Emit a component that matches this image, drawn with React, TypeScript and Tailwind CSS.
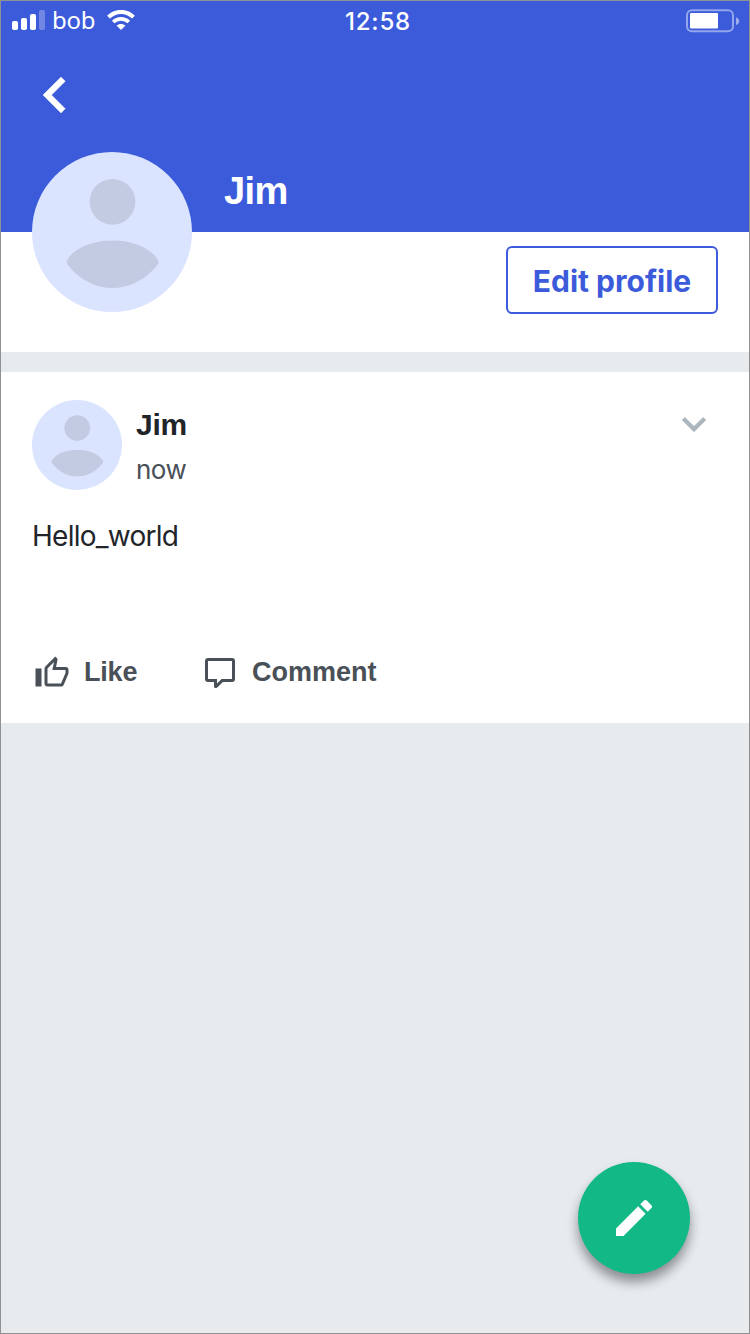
import React from "react";

function Avatar({ className }: { className: string }) {
  return (
    <svg viewBox="0 0 160 160" className={className}>
      <circle cx="80" cy="80" r="80" fill="#dbe4ff" />
      <circle cx="80.5" cy="49.8" r="22.9" fill="#c3cbe3" />
      <path
        d="M35.6 107.5C42 96 60 88.4 80.5 88.4S119 96 125.6 107.5Q127.6 110 125.6 112.5C114 128 97 136 80.5 136S47 128 35.6 112.5Q33.6 110 35.6 107.5Z"
        fill="#c3cbe3"
      />
    </svg>
  );
}

function Icon({ d, className }: { d: string; className: string }) {
  return (
    <svg viewBox="0 0 24 24" fill="currentColor" className={className}>
      <path d={d} />
    </svg>
  );
}

const icons = {
  back: "M15.41 16.58 10.83 12l4.58-4.59L14 6l-6 6 6 6 1.41-1.42Z",
  down: "M7.41 8.58 12 13.17l4.59-4.59L18 10l-6 6-6-6 1.41-1.42Z",
  like: "M5,9V21H1V9H5M9,21A2,2 0 0,1 7,19V9C7,8.45 7.22,7.95 7.59,7.59L14.17,1L15.23,2.06C15.5,2.33 15.67,2.7 15.67,3.11L15.64,3.43L14.69,8H21A2,2 0 0,1 23,10V12C23,12.26 22.95,12.5 22.86,12.73L19.84,19.78C19.54,20.5 18.83,21 18,21H9M9,19H18.03L21,12V10H12.21L13.34,4.68L9,9.03V19Z",
  comment:
    "M9,22A1,1 0 0,1 8,21V18H4A2,2 0 0,1 2,16V4C2,2.89 2.9,2 4,2H20A2,2 0 0,1 22,4V16A2,2 0 0,1 20,18H13.9L10.2,21.71C10,21.9 9.75,22 9.5,22H9M10,16V19.08L13.08,16H20V4H4V16H10Z",
  pencil:
    "M20.71,7.04C21.1,6.65 21.1,6 20.71,5.63L18.37,3.29C18,2.9 17.35,2.9 16.96,3.29L15.12,5.12L18.87,8.87M3,17.25V21H6.75L17.81,9.93L14.06,6.18L3,17.25Z",
};

function StatusBar() {
  return (
    <div className="grid h-[39px] grid-cols-3 items-center text-white">
      <div className="flex items-center pl-[11px]">
        <svg viewBox="0 0 33 20" className="-mt-px h-5 w-[33px]" fill="white">
          <rect x="0" y="11" width="6" height="9" rx="1.8" />
          <rect x="9" y="8" width="6" height="12" rx="1.8" />
          <rect x="18" y="4" width="6" height="16" rx="1.8" />
          <rect x="27" y="0" width="6" height="20" rx="1.8" opacity="0.27" />
        </svg>
        <span className="-mt-[2px] ml-[7px] w-[43px] whitespace-nowrap font-['Noto_Sans',sans-serif] text-2xl leading-none tracking-[-0.3px]">
          bob
        </span>
        <svg viewBox="0 0 28 20" className="-mt-px ml-3 h-5 w-7" fill="none" stroke="white">
          <path d="M1.5 7.2C8.5.1 19.5.1 26.5 7.2" strokeWidth="4" />
          <path d="M6.2 12C10.7 7.7 17.3 7.7 21.8 12" strokeWidth="3.7" />
          <path d="M9.5 15.6C12 13.4 16 13.4 18.5 15.6L14 20Z" fill="white" stroke="none" />
        </svg>
      </div>
      <div className="pl-[6px] pt-[2px] text-center font-[Inter,sans-serif] text-2xl font-medium leading-none tracking-[0.8px]">
        12:58
      </div>
      <div className="flex justify-end pr-[9px]">
        <svg viewBox="0 0 54 24" className="h-6 w-[54px]">
          <rect x="1" y="1.3" width="46" height="21" rx="5" fill="none" stroke="white" strokeOpacity="0.45" strokeWidth="2" />
          <rect x="4" y="4" width="28" height="15.5" rx="1" fill="white" />
          <path d="M50 8.3C52 9 53.2 10.4 53.2 12.2S52 15.4 50 16.1Z" fill="white" opacity="0.5" />
        </svg>
      </div>
    </div>
  );
}

export default function App() {
  return (
    <div className="relative flex h-[1334px] w-[750px] flex-col overflow-hidden border border-[#8f9192] bg-[#e7ebee] font-[Inter,sans-serif] text-[#212529]">
      <header className="h-[231px] shrink-0 bg-[#3b5bdb] text-white">
        <StatusBar />
        <button className="ml-[18px] mt-[19px] block size-[72px]" aria-label="Back">
          <Icon d={icons.back} className="size-[72px] stroke-current stroke-[0.16px]" />
        </button>
        <div className="mt-[21px] flex pl-[31px]">
          <Avatar className="relative size-40 shrink-0" />
          <h1 className="ml-8 mt-[17px] font-['Liberation_Sans',sans-serif] text-[38px] font-bold leading-[44px] tracking-[-0.6px]">
            Jim
          </h1>
        </div>
      </header>

      <section className="flex h-[120px] shrink-0 items-start justify-end bg-white pr-[31px] pt-[14px]">
        <button className="h-[68px] w-[212px] whitespace-nowrap rounded-[6px] border-2 border-[#3b5bdb] pt-px text-[30px] font-bold leading-none text-[#3b5bdb]">
          Edit profile
        </button>
      </section>

      <article className="mt-5 flex h-[351px] shrink-0 flex-col bg-white pl-[31px] pr-[31px] pt-7">
        <div className="flex">
          <Avatar className="size-[90px] shrink-0" />
          <div className="ml-[14px] flex-1">
            <h2 className="mt-[7px] font-['Liberation_Sans',sans-serif] text-[30px] font-bold leading-9 tracking-[-0.3px]">
              Jim
            </h2>
            <p className="mt-[9px] text-[26px] leading-9 tracking-[-0.5px] text-[#495057]">now</p>
          </div>
          <Icon d={icons.down} className="size-12 stroke-current stroke-[0.16px] text-[#adb5bd]" />
        </div>
        <p className="mt-7 text-[28px] leading-9 tracking-[-0.75px]">Hello_world</p>
        <div className="mt-[101px] flex items-center font-['Liberation_Sans',sans-serif] text-[27px] font-bold leading-9 text-[#495057]">
          <button className="flex w-[170px] items-center">
            <Icon d={icons.like} className="ml-[2px] size-9" />
            <span className="-mt-[3px] ml-[14px] tracking-[-0.2px]">Like</span>
          </button>
          <button className="flex items-center">
            <Icon d={icons.comment} className="size-9" />
            <span className="-mt-[3px] ml-[14px]">Comment</span>
          </button>
        </div>
      </article>

      <button
        aria-label="Write post"
        className="absolute bottom-[59px] right-[59px] flex size-28 items-center justify-center rounded-full bg-[#12b886] text-white shadow-[0_8px_12px_rgba(0,0,0,0.4)]"
      >
        <Icon d={icons.pencil} className="size-12" />
      </button>
    </div>
  );
}
